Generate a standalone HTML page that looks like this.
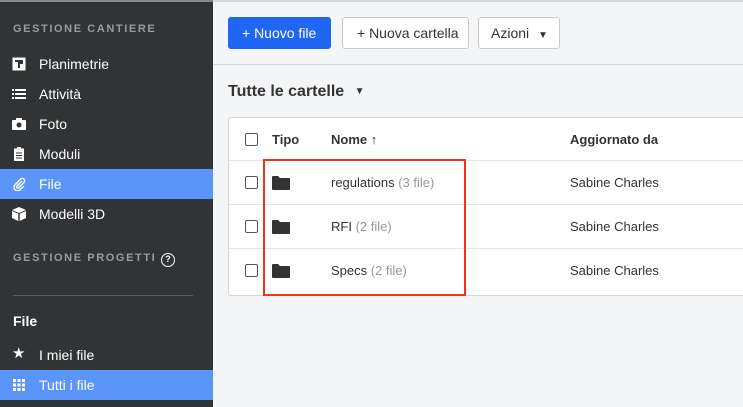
<!DOCTYPE html>
<html><head><style>
*{margin:0;padding:0;box-sizing:border-box}
body{width:743px;height:407px;overflow:hidden;font-family:"Liberation Sans",sans-serif;background:#f4f5f7;position:relative}
.sb{position:absolute;left:0;top:0;width:213px;height:407px;background:#323335;color:#fff;border-top:2px solid #8a8b8d}
.h{position:absolute;left:13px;font-size:11px;letter-spacing:1.6px;color:#9a9b9e;font-weight:bold}
.it{position:absolute;left:0;width:213px;height:30px;font-size:14px;line-height:30px;padding-left:39px}
.it.a{background:#5b95f9}
.ic{position:absolute;left:12px;top:8px;width:14px;height:14px}
.main{position:absolute;left:213px;top:0;right:0;height:407px}
.tb{position:absolute;left:0;right:0;top:0;height:65px;border-top:2px solid #d6d7d9;border-bottom:1px solid #d6d7d9}
.btn{position:absolute;top:15px;height:32px;border:1px solid #c9cbcf;background:#fff;border-radius:3px;font-size:14px;line-height:30px;color:#333}
.tbl{position:absolute;left:15px;top:117px;width:540px;height:179px;background:#fff;border:1px solid #d6d7d9;border-right:none;border-radius:3px 0 0 3px}
.row{position:absolute;left:0;right:0;height:44px;border-bottom:1px solid #e3e4e6;font-size:13px;color:#333;line-height:44px}
.cb{position:absolute;left:16px;top:15px;width:13px;height:13px;border:1px solid #555;border-radius:2px;background:#fff}
.fd{position:absolute;left:43px;top:15px;width:18px;height:14px}
.g{color:#999}
</style></head><body>
<div class="sb">
<div class="h" style="top:21px">GESTIONE CANTIERE</div>
<div class="it" style="top:47px"><svg class="ic" viewBox="0 0 14 14"><rect x="0.5" y="0.5" width="13" height="13" fill="#fff"/><path d="M3 3h8v4H8v4H6V5H3z" fill="#323335"/></svg>Planimetrie</div>
<div class="it" style="top:77px"><svg class="ic" viewBox="0 0 14 14" fill="#fff"><rect x="0" y="2" width="2" height="2"/><rect x="3" y="2" width="11" height="2"/><rect x="0" y="6" width="2" height="2"/><rect x="3" y="6" width="11" height="2"/><rect x="0" y="10" width="2" height="2"/><rect x="3" y="10" width="11" height="2"/></svg>Attività</div>
<div class="it" style="top:107px"><svg class="ic" viewBox="0 0 14 14"><rect x="0" y="3" width="14" height="10" rx="1" fill="#fff"/><rect x="4" y="1" width="6" height="3" fill="#fff"/><circle cx="7" cy="8" r="2.5" fill="#323335"/></svg>Foto</div>
<div class="it" style="top:137px"><svg class="ic" viewBox="0 0 14 14"><rect x="2" y="1.5" width="10" height="12.5" fill="#fff"/><rect x="5" y="0" width="4" height="3" fill="#fff"/><path d="M4 6h6M4 8.5h6M4 11h6" stroke="#323335"/></svg>Moduli</div>
<div class="it a" style="top:167px"><svg class="ic" viewBox="0 0 14 14"><path d="M10 4 5 9a1.2 1.2 0 0 0 1.7 1.7L12 5.5a2.4 2.4 0 0 0-3.4-3.4L3 7.7a3.6 3.6 0 0 0 5.1 5.1L12 9" stroke="#fff" fill="none" stroke-width="1.4"/></svg>File</div>
<div class="it" style="top:197px"><svg class="ic" viewBox="0 0 14 14" fill="#fff"><path d="M7 0 14 3 7 6 0 3z"/><path d="M0 4l6.3 2.8V14L0 11z"/><path d="M14 4 7.7 6.8V14L14 11z"/></svg>Modelli 3D</div>
<div class="h" style="top:250px">GESTIONE PROGETTI <span style="display:inline-block;width:14px;height:14px;border:1.5px solid #fff;border-radius:50%;color:#fff;font-size:9px;text-align:center;line-height:11px;letter-spacing:0;vertical-align:-1px">?</span></div>
<div style="position:absolute;left:13px;top:293px;width:180px;height:1px;background:#5a5b5e"></div>
<div style="position:absolute;left:13px;top:311px;font-size:14px;font-weight:bold">File</div>
<div class="it" style="top:338px"><span class="ic" style="top:6px;font-size:15px;line-height:15px">★</span>I miei file</div>
<div class="it a" style="top:368px"><svg class="ic" viewBox="0 0 14 14" fill="#fff"><rect x="1" y="1" width="3" height="3"/><rect x="5.5" y="1" width="3" height="3"/><rect x="10" y="1" width="3" height="3"/><rect x="1" y="5.5" width="3" height="3"/><rect x="5.5" y="5.5" width="3" height="3"/><rect x="10" y="5.5" width="3" height="3"/><rect x="1" y="10" width="3" height="3"/><rect x="5.5" y="10" width="3" height="3"/><rect x="10" y="10" width="3" height="3"/></svg>Tutti i file</div>
</div>
<div class="main">
<div class="tb">
<div class="btn" style="left:15px;width:103px;background:#1f66f5;border-color:#1f66f5;color:#fff;padding-left:13px">+ Nuovo file</div>
<div class="btn" style="left:129px;width:127px;padding-left:14px">+ Nuova cartella</div>
<div class="btn" style="left:265px;width:82px;padding-left:12px">Azioni <span style="font-size:10px;margin-left:5px">▼</span></div>
</div>
<div style="position:absolute;left:15px;top:83px;font-size:16px;font-weight:bold;color:#333">Tutte le cartelle <span style="font-size:10px;margin-left:6px;vertical-align:2px">▼</span></div>
<div class="tbl">
<div class="row" style="top:0;font-weight:bold;height:43px"><div class="cb"></div><span style="position:absolute;left:43px">Tipo</span><span style="position:absolute;left:102px">Nome <span style="font-weight:normal">↑</span></span><span style="position:absolute;left:341px">Aggiornato da</span></div>
<div class="row" style="top:43px"><div class="cb"></div><svg class="fd" viewBox="0 0 18 14"><path d="M0 1a1 1 0 0 1 1-1h5l2 2h9a1 1 0 0 1 1 1v10a1 1 0 0 1-1 1H1a1 1 0 0 1-1-1z" fill="#333"/></svg><span style="position:absolute;left:102px">regulations <span class="g">(3 file)</span></span><span style="position:absolute;left:341px">Sabine Charles</span></div>
<div class="row" style="top:87px"><div class="cb"></div><svg class="fd" viewBox="0 0 18 14"><path d="M0 1a1 1 0 0 1 1-1h5l2 2h9a1 1 0 0 1 1 1v10a1 1 0 0 1-1 1H1a1 1 0 0 1-1-1z" fill="#333"/></svg><span style="position:absolute;left:102px">RFI <span class="g">(2 file)</span></span><span style="position:absolute;left:341px">Sabine Charles</span></div>
<div class="row" style="top:131px;border-bottom:none"><div class="cb"></div><svg class="fd" viewBox="0 0 18 14"><path d="M0 1a1 1 0 0 1 1-1h5l2 2h9a1 1 0 0 1 1 1v10a1 1 0 0 1-1 1H1a1 1 0 0 1-1-1z" fill="#333"/></svg><span style="position:absolute;left:102px">Specs <span class="g">(2 file)</span></span><span style="position:absolute;left:341px">Sabine Charles</span></div>
</div>
<div style="position:absolute;left:50px;top:159px;width:203px;height:137px;border:2.5px solid #f0321e"></div>
</div>
</body></html>
